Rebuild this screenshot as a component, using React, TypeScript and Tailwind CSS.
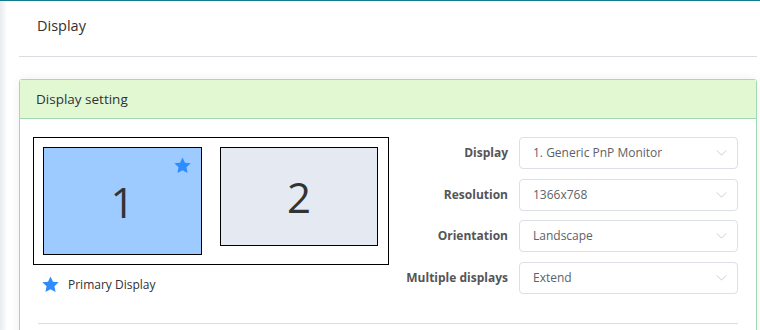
import React from 'react'

const font = { fontFamily: '"Open Sans", "Noto Sans", sans-serif' }

function Star({ className }: { className?: string }) {
    return (
        <svg viewBox="0 0 24 24" className={className} fill="#2d8cff">
            <path d="M12 1.8l3.1 6.6 7.2.9-5.3 5 1.4 7.1L12 17.9l-6.4 3.5L7 14.3 1.7 9.3l7.2-.9z" />
        </svg>
    )
}

function Chevron() {
    return (
        <svg viewBox="0 0 12 7" className="w-[11px] h-[6px]" fill="none" stroke="#c0c4cc" strokeWidth="1">
            <path d="M0.5 0.5L6 6l5.5-5.5" />
        </svg>
    )
}

const rows = [
    { label: 'Display', value: '1. Generic PnP Monitor' },
    { label: 'Resolution', value: '1366x768' },
    { label: 'Orientation', value: 'Landscape' },
    { label: 'Multiple displays', value: 'Extend' },
]

export default function App() {
    return (
        <div
            className="w-[760px] h-[330px] overflow-hidden bg-white border-t border-[#137a8e] flex"
            style={font}
        >
            <div className="w-[6px] shrink-0 bg-gradient-to-r from-[#e9ecef] to-[#f9fafb]" />
            <div className="flex-1 min-w-0 pl-[13px] pr-[3px]">
                {/* page title */}
                <div className="h-[56px] flex items-center pl-[18px] pb-[6px] border-b border-[#dcdde3] text-[14.5px] text-[#303133]">
                    Display
                </div>

                {/* settings card */}
                <div className="mt-[22px] rounded-[3px] border border-[#a5d9b3] shadow-[0_0_10px_rgba(0,0,0,0.07)] h-[300px]">
                    <div className="h-[39px] bg-[#e2f8d3] border-b border-[#a5d9b3] flex items-center pl-[16px] text-[13.5px] text-[#303133]">
                        Display setting
                    </div>
                    <div className="flex pt-[18px] pl-[13px] pr-[18px]">
                        <div>
                            <div className="w-[356px] h-[128px] border border-black p-[9px] flex items-start gap-[18px]">
                                <div className="relative w-[159px] h-[108px] border border-black bg-[#9dcaff] flex items-center justify-center text-[42px] text-[#333]">
                                    1
                                    <Star className="absolute top-[8px] right-[9px] w-[19px] h-[19px]" />
                                </div>
                                <div className="w-[158px] h-[99px] border border-black bg-[#e4e9f2] flex items-center justify-center text-[42px] text-[#333]">
                                    2
                                </div>
                            </div>
                            <div className="flex items-center gap-[8px] pl-[8px] mt-[10px] text-[12px] text-[#303133]">
                                <Star className="w-[19px] h-[19px]" />
                                Primary Display
                            </div>
                        </div>
                        <div className="ml-auto flex flex-col gap-[9.5px]">
                            {rows.map((r) => (
                                <div key={r.label} className="flex items-center gap-[11px]">
                                    <span className="w-[118px] text-right text-[12px] font-bold text-[#555]">
                                        {r.label}
                                    </span>
                                    <div className="w-[219px] h-[32px] border border-[#dcdfe6] rounded-[4px] flex items-center justify-between pl-[13px] pr-[10px] text-[12px] text-[#606266]">
                                        {r.value}
                                        <Chevron />
                                    </div>
                                </div>
                            ))}
                        </div>
                    </div>
                    <div className="mx-[18px] mt-[29px] border-t border-[#dcdde3]" />
                </div>
            </div>
        </div>
    )
}
